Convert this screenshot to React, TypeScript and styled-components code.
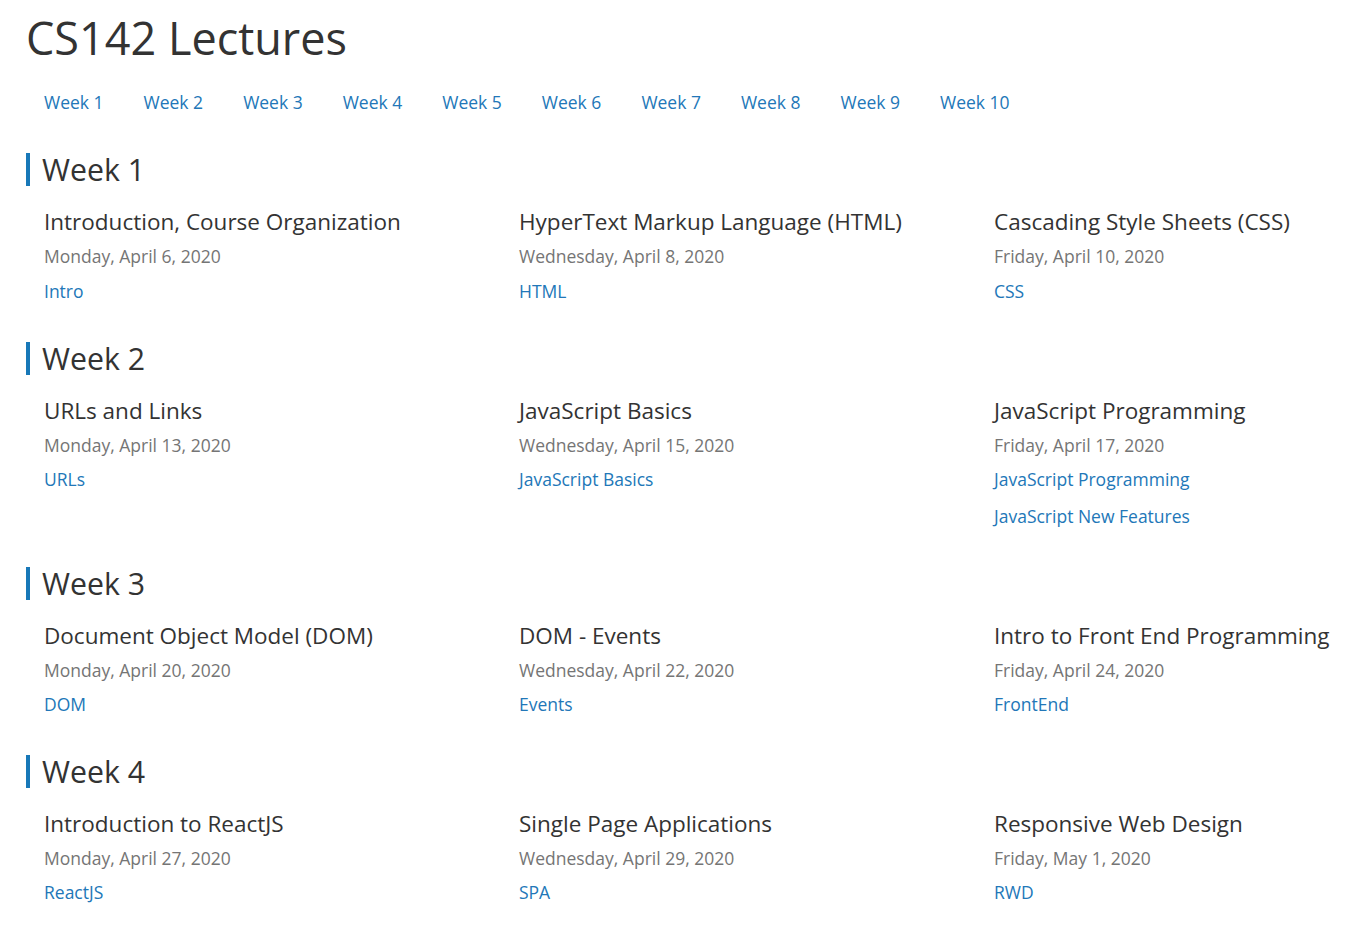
import styled, { createGlobalStyle } from 'styled-components'

const GlobalStyle = createGlobalStyle`
  html, body {
    margin: 0;
    padding: 0;
    background: #fff;
    overflow-x: hidden;
  }
  body {
    font-family: 'Open Sans', 'Noto Sans', sans-serif;
    color: #333;
  }
`

const Page = styled.div`
  padding: 11px 26px 20px;
`

const Title = styled.h1`
  margin: 0;
  font-size: 45px;
  font-weight: 400;
  line-height: 54px;
  color: #333;
`

const Nav = styled.nav`
  display: flex;
  gap: 40px;
  margin: 27px 0 0;
  padding-left: 18px;
`

const NavLink = styled.a`
  font-size: 17.5px;
  line-height: 20.4px;
  color: #2277b8;
  text-decoration: none;
  white-space: nowrap;
`

const Section = styled.section`
  margin-top: 40.5px;
  &:first-of-type {
    margin-top: 41px;
  }
`

const WeekHeading = styled.h2`
  margin: 0;
  font-size: 30.3px;
  font-weight: 400;
  line-height: 33px;
  border-left: 4px solid #1878b8;
  padding-left: 12px;
  color: #333;
`

const Grid = styled.div`
  display: grid;
  grid-template-columns: repeat(3, 475px);
  margin-top: 23px;
  padding-left: 18px;
`

const Card = styled.div`
  display: flex;
  flex-direction: column;
  align-items: flex-start;
`

const LectureTitle = styled.div`
  font-size: 22.5px;
  line-height: 26.4px;
  color: #333;
  white-space: nowrap;
`

const LectureDate = styled.div`
  margin-top: 10.5px;
  font-size: 17.5px;
  line-height: 20.4px;
  color: #757575;
`

const Links = styled.div`
  display: flex;
  flex-direction: column;
  gap: 16.6px;
  margin-top: 14px;
`

const LectureLink = styled.a`
  font-size: 17.5px;
  line-height: 20.4px;
  color: #2277b8;
  text-decoration: none;
`

interface ILecture {
  title: string
  date: string
  links: string[]
}

interface IWeek {
  name: string
  lectures: ILecture[]
}

const weeks: IWeek[] = [
  {
    name: 'Week 1',
    lectures: [
      { title: 'Introduction, Course Organization', date: 'Monday, April 6, 2020', links: ['Intro'] },
      { title: 'HyperText Markup Language (HTML)', date: 'Wednesday, April 8, 2020', links: ['HTML'] },
      { title: 'Cascading Style Sheets (CSS)', date: 'Friday, April 10, 2020', links: ['CSS'] },
    ],
  },
  {
    name: 'Week 2',
    lectures: [
      { title: 'URLs and Links', date: 'Monday, April 13, 2020', links: ['URLs'] },
      { title: 'JavaScript Basics', date: 'Wednesday, April 15, 2020', links: ['JavaScript Basics'] },
      {
        title: 'JavaScript Programming',
        date: 'Friday, April 17, 2020',
        links: ['JavaScript Programming', 'JavaScript New Features'],
      },
    ],
  },
  {
    name: 'Week 3',
    lectures: [
      { title: 'Document Object Model (DOM)', date: 'Monday, April 20, 2020', links: ['DOM'] },
      { title: 'DOM - Events', date: 'Wednesday, April 22, 2020', links: ['Events'] },
      { title: 'Intro to Front End Programming', date: 'Friday, April 24, 2020', links: ['FrontEnd'] },
    ],
  },
  {
    name: 'Week 4',
    lectures: [
      { title: 'Introduction to ReactJS', date: 'Monday, April 27, 2020', links: ['ReactJS'] },
      { title: 'Single Page Applications', date: 'Wednesday, April 29, 2020', links: ['SPA'] },
      { title: 'Responsive Web Design', date: 'Friday, May 1, 2020', links: ['RWD'] },
    ],
  },
]

const navWeeks = Array.from({ length: 10 }, (_, i) => `Week ${i + 1}`)

function App() {
  return (
    <>
      <GlobalStyle />
      <Page>
        <Title>CS142 Lectures</Title>
        <Nav>
          {navWeeks.map((w) => (
            <NavLink key={w} href="#">
              {w}
            </NavLink>
          ))}
        </Nav>
        {weeks.map((week) => (
          <Section key={week.name}>
            <WeekHeading>{week.name}</WeekHeading>
            <Grid>
              {week.lectures.map((lecture) => (
                <Card key={lecture.title}>
                  <LectureTitle>{lecture.title}</LectureTitle>
                  <LectureDate>{lecture.date}</LectureDate>
                  <Links>
                    {lecture.links.map((l) => (
                      <LectureLink key={l} href="#">
                        {l}
                      </LectureLink>
                    ))}
                  </Links>
                </Card>
              ))}
            </Grid>
          </Section>
        ))}
      </Page>
    </>
  )
}

export default App
